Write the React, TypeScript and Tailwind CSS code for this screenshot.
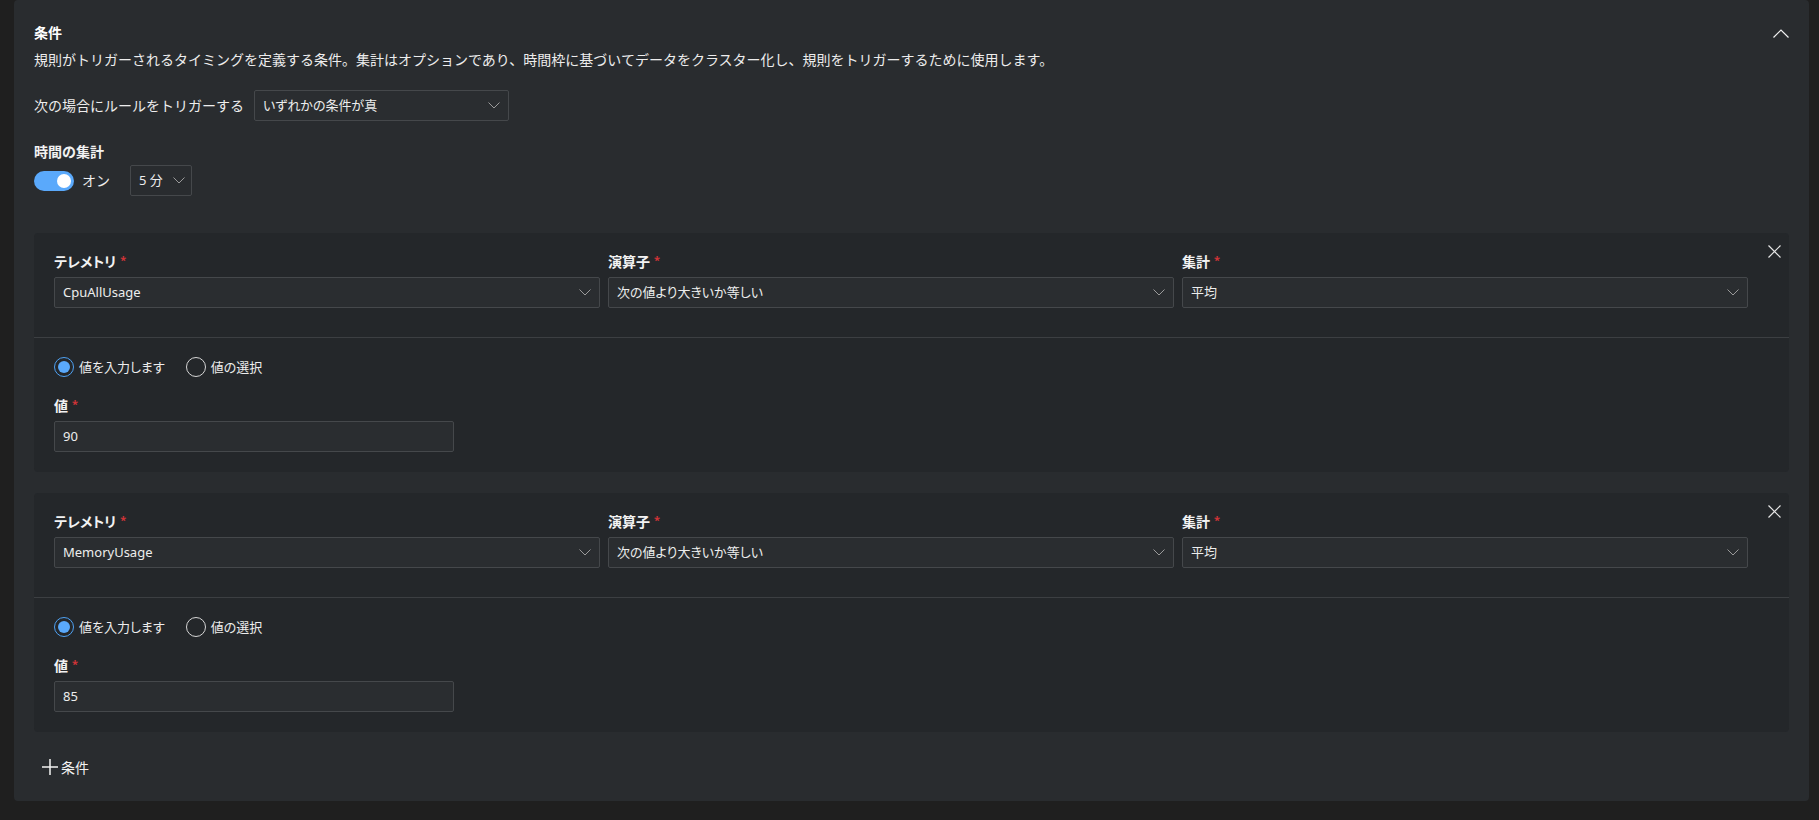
import type { ReactNode } from 'react';

function ChevronDown() {
    return (
        <svg width="12" height="7" viewBox="0 0 12 7" fill="none" className="text-[#9a9a9a]">
            <path d="M0.5 0.5L6 6L11.5 0.5" stroke="currentColor" strokeWidth="1" />
        </svg>
    );
}

function ChevronUp() {
    return (
        <svg width="16" height="9" viewBox="0 0 16 9" fill="none" className="text-[#f2f2f2]">
            <path d="M0.5 8.5L8 1L15.5 8.5" stroke="currentColor" strokeWidth="1.2" />
        </svg>
    );
}

function CloseIcon() {
    return (
        <svg width="13" height="13" viewBox="0 0 13 13" fill="none" className="text-[#e6e6e6]">
            <path d="M0.5 0.5L12.5 12.5M12.5 0.5L0.5 12.5" stroke="currentColor" strokeWidth="1.2" />
        </svg>
    );
}

function PlusIcon() {
    return (
        <svg width="16" height="16" viewBox="0 0 16 16" fill="none" className="text-[#f2f2f2]">
            <path d="M8 0V16M0 8H16" stroke="currentColor" strokeWidth="1.5" />
        </svg>
    );
}

function Select({ value, className = '' }: { value: string; className?: string }) {
    return (
        <div
            className={`flex h-[31px] items-center justify-between rounded-[2px] border border-[#45484b] bg-[#2a2d30] pl-2 pr-2 text-[13px] text-[#ededed] [font-feature-settings:'palt'] ${className}`}
        >
            <span>{value}</span>
            <ChevronDown />
        </div>
    );
}

function Label({ children }: { children: ReactNode }) {
    return (
        <div className="flex h-5 items-center text-[14px] font-bold leading-5 text-[#f2f2f2] [font-feature-settings:'palt']">
            {children}
            <span className="ml-1 self-start text-[11px] leading-4 text-[#d13438]">*</span>
        </div>
    );
}

function Radio({ checked, label }: { checked?: boolean; label: string }) {
    return (
        <div className="flex items-center gap-[5px]">
            <span
                className={`flex h-5 w-5 items-center justify-center rounded-full border ${
                    checked ? 'border-[#4ea1f3]' : 'border-[#d6d6d6]'
                }`}
            >
                {checked && <span className="h-3 w-3 rounded-full bg-[#5aa9fb]" />}
            </span>
            <span className="text-[13px] leading-5 text-[#ededed] [font-feature-settings:'palt']">{label}</span>
        </div>
    );
}

function ConditionCard({ telemetry, value }: { telemetry: string; value: string }) {
    return (
        <div className="relative rounded-[4px] bg-[#24272a]">
            <button className="absolute right-2 top-3 p-0" aria-label="削除">
                <CloseIcon />
            </button>
            {/* Fields */}
            <div className="flex gap-2 px-5 pb-[29px] pt-[19px]">
                <div className="w-[546px]">
                    <Label>テレメトリ</Label>
                    <Select value={telemetry} className="mt-[5px]" />
                </div>
                <div className="w-[566px]">
                    <Label>演算子</Label>
                    <Select value="次の値より大きいか等しい" className="mt-[5px]" />
                </div>
                <div className="w-[566px]">
                    <Label>集計</Label>
                    <Select value="平均" className="mt-[5px]" />
                </div>
            </div>
            <div className="h-px bg-[#3c3f42]" />
            {/* Value */}
            <div className="px-5 pb-5 pt-[19px]">
                <div className="flex items-center gap-[21px]">
                    <Radio checked label="値を入力します" />
                    <Radio label="値の選択" />
                </div>
                <div className="mt-[19px]">
                    <Label>値</Label>
                </div>
                <div className="mt-[5px] flex h-[31px] w-[400px] items-center rounded-[2px] border border-[#45484b] bg-[#2a2d30] pl-2 text-[13px] text-[#ededed]">
                    {value}
                </div>
            </div>
        </div>
    );
}

export default function App() {
    return (
        <div className="min-h-screen bg-[#1f1f1f] pl-[14px] pr-[10px] font-['Noto_Sans','Noto_Sans_CJK_JP',sans-serif]">
            <div className="rounded-b-[4px] rounded-t-[4px] bg-[#292c2f] px-5 pb-[18px] pt-[23px]">
                {/* Header */}
                <div className="flex h-5 items-center justify-between">
                    <h2 className="text-[14px] font-bold leading-5 text-white">条件</h2>
                    <button aria-label="折りたたむ">
                        <ChevronUp />
                    </button>
                </div>
                <p className="mt-[7px] text-[14px] leading-5 text-[#ededed]">
                    規則がトリガーされるタイミングを定義する条件。集計はオプションであり、時間枠に基づいてデータをクラスター化し、規則をトリガーするために使用します。
                </p>

                <div className="mt-5 flex items-center">
                    <span className="text-[14px] leading-5 text-[#ededed]">次の場合にルールをトリガーする</span>
                    <Select value="いずれかの条件が真" className="ml-[10px] w-[255px]" />
                </div>

                <div className="mt-[21px] text-[14px] font-bold leading-5 text-[#f2f2f2]">時間の集計</div>
                <div className="mt-[3px] flex h-[31px] items-center">
                    <span className="flex h-5 w-10 items-center justify-end rounded-full bg-[#5aa9fb] pr-[3px]">
                        <span className="h-[14px] w-[14px] rounded-full bg-white" />
                    </span>
                    <span className="ml-2 text-[14px] leading-5 text-[#ededed]">オン</span>
                    <div className="ml-5 flex h-[31px] w-[62px] items-center justify-between rounded-[2px] border border-[#45484b] pl-[8px] pr-[6px] text-[13px] text-[#ededed]">
                        <span>5 分</span>
                        <ChevronDown />
                    </div>
                </div>

                {/* Conditions */}
                <div className="mt-[37px] flex flex-col gap-[21px]">
                    <ConditionCard telemetry="CpuAllUsage" value="90" />
                    <ConditionCard telemetry="MemoryUsage" value="85" />
                </div>

                <button className="mt-[19px] flex h-8 items-center gap-[3px] pl-[8px] text-[14px] text-[#f2f2f2]">
                    <PlusIcon />
                    <span>条件</span>
                </button>
            </div>
        </div>
    );
}
